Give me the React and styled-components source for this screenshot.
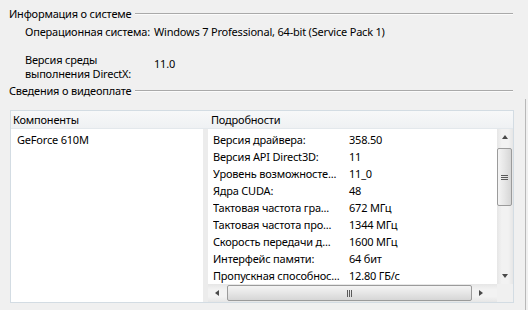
import React from "react"
import styled, { createGlobalStyle } from "styled-components"

const GlobalStyle = createGlobalStyle`
  html, body {
    margin: 0;
    padding: 0;
    background: #f0f0f0;
  }
  body {
    font-family: "Noto Sans", "Open Sans", sans-serif;
    font-size: 11px;
    letter-spacing: -0.2px;
    color: #000;
  }
`

const details = [
  ["Версия драйвера:", "358.50"],
  ["Версия API Direct3D:", "11"],
  ["Уровень возможносте...", "11_0"],
  ["Ядра CUDA:", "48"],
  ["Тактовая частота гра...", "672 МГц"],
  ["Тактовая частота про...", "1344 МГц"],
  ["Скорость передачи д...", "1600 МГц"],
  ["Интерфейс памяти:", "64 бит"],
  ["Пропускная способнос...", "12.80 ГБ/с"],
]

const Arrow = ({ dir }) => <ArrowGlyph $dir={dir} />

const App = () => {
  return (
    <Window>
      <GlobalStyle />
      <GroupTitle>
        <span>Информация о системе</span>
        <Rule />
      </GroupTitle>

      <InfoGrid>
        <InfoLabel>Операционная система:</InfoLabel>
        <InfoValue>Windows 7 Professional, 64-bit (Service Pack 1)</InfoValue>
        <InfoLabel $tall>
          Версия среды
          <br />
          выполнения DirectX:
        </InfoLabel>
        <InfoValue $tall>11.0</InfoValue>
      </InfoGrid>

      <GroupTitle $second>
        <span>Сведения о видеоплате</span>
        <Rule />
      </GroupTitle>

      <VideoArea>
        <ListPanel>
          <HeaderCell>Компоненты</HeaderCell>
          <HeaderCell $details>Подробности</HeaderCell>

          <ComponentList>
            <ListRow $left>GeForce 610M</ListRow>
          </ComponentList>
          <Splitter />
          <DetailsPane>
            <DetailsView>
              {details.map(([label, value]) => (
                <ListRow key={label}>
                  <DetailLabel>{label}</DetailLabel>
                  <span>{value}</span>
                </ListRow>
              ))}
            </DetailsView>

            <VScroll>
              <ScrollButton $v>
                <Arrow dir="up" />
              </ScrollButton>
              <Thumb $v>
                <svg width="7" height="7" viewBox="0 0 7 7">
                  <path d="M0 1.5h7M0 3.5h7M0 5.5h7" stroke="#5a5a5a" strokeWidth="1" />
                </svg>
              </Thumb>
              <Track />
              <ScrollButton $v>
                <Arrow dir="down" />
              </ScrollButton>
            </VScroll>

            <HScroll>
              <ScrollButton>
                <Arrow dir="left" />
              </ScrollButton>
              <Thumb>
                <svg width="7" height="7" viewBox="0 0 7 7">
                  <path d="M1.5 0v7M3.5 0v7M5.5 0v7" stroke="#5a5a5a" strokeWidth="1" />
                </svg>
              </Thumb>
              <ScrollButton>
                <Arrow dir="right" />
              </ScrollButton>
            </HScroll>

            <Corner />
          </DetailsPane>
        </ListPanel>
      </VideoArea>
    </Window>
  )
}

const Window = styled.div`
  width: 528px;
  height: 310px;
  padding-top: 6px;
  box-sizing: border-box;
  background: #f0f0f0;
  overflow: hidden;
  display: flex;
  flex-direction: column;
`

/* group caption with an etched rule that always starts at the same column */
const GroupTitle = styled.div`
  display: grid;
  grid-template-columns: 126px 1fr;
  align-items: center;
  height: 16px;
  line-height: 16px;
  padding: 0 15px 0 9px;
  margin-top: ${({ $second }) => ($second ? "2px" : "0")};
  white-space: nowrap;
`

const Rule = styled.div`
  height: 1px;
  background: #a9a9a9;
  border-bottom: 1px solid #fbfbfb;
`

const InfoGrid = styled.div`
  display: grid;
  grid-template-columns: 129px 1fr;
  row-gap: 13px;
  margin-top: 2px;
  padding-left: 25px;
`

const InfoLabel = styled.div`
  line-height: ${({ $tall }) => ($tall ? "14px" : "16px")};
  white-space: nowrap;
`

const InfoValue = styled.div`
  line-height: ${({ $tall }) => ($tall ? "14px" : "16px")};
  padding-top: ${({ $tall }) => ($tall ? "4px" : "0")};
  white-space: nowrap;
`

const VideoArea = styled.div`
  flex: 1;
  margin-right: 2px;
  padding: 11px 11px 0 10px;
  border-right: 1px solid #b8b8b8;
`

const ListPanel = styled.div`
  height: 193px;
  box-sizing: border-box;
  border: 1px solid #d3dce3;
  display: grid;
  grid-template-columns: 192px 5px 1fr;
  grid-template-rows: 18px 1fr;
  background: #fff;
`

const HeaderCell = styled.div`
  grid-column: ${({ $details }) => ($details ? "2 / 4" : "1")};
  padding-left: ${({ $details }) => ($details ? "8px" : "2px")};
  line-height: 18px;
  white-space: nowrap;
  background: linear-gradient(#f7f8f9, #eff1f3);
  border-bottom: 1px solid #e3e8ec;
  box-sizing: border-box;
`

const ComponentList = styled.div`
  padding-top: 2px;
  background: #fff;
`

const Splitter = styled.div`
  background: #ececec;
`

const DetailsPane = styled.div`
  display: grid;
  grid-template-columns: 1fr 16px;
  grid-template-rows: 1fr 18px;
  min-height: 0;
`

const DetailsView = styled.div`
  padding-top: 2px;
  overflow: hidden;
  background: #fff;
`

const ListRow = styled.div`
  display: flex;
  height: 17px;
  line-height: 17px;
  padding-left: ${({ $left }) => ($left ? "6px" : "5px")};
  white-space: nowrap;
`

const DetailLabel = styled.span`
  width: 136px;
  flex: none;
  overflow: hidden;
`

const VScroll = styled.div`
  display: flex;
  flex-direction: column;
  background: linear-gradient(90deg, #e6e6e6, #f2f2f2 30%, #f2f2f2 70%, #e6e6e6);
`

const HScroll = styled.div`
  display: flex;
  align-items: center;
  background: linear-gradient(#e6e6e6, #f2f2f2 30%, #f2f2f2 70%, #e6e6e6);
`

const Track = styled.div`
  flex: 1;
`

const ScrollButton = styled.div`
  flex: none;
  width: ${({ $v }) => ($v ? "16px" : "17px")};
  height: ${({ $v }) => ($v ? "17px" : "18px")};
  display: flex;
  align-items: center;
  justify-content: center;
`

const ArrowGlyph = styled.span`
  width: 0;
  height: 0;
  border: 3px solid transparent;
  ${({ $dir }) =>
    ({
      up: "border-bottom: 4px solid #4a4a4a; border-top: 0; margin-top: -1px;",
      down: "border-top: 4px solid #4a4a4a; border-bottom: 0;",
      left: "border-right: 4px solid #4a4a4a; border-left: 0;",
      right: "border-left: 4px solid #4a4a4a; border-right: 0;",
    })[$dir]}
`

const Thumb = styled.div`
  box-sizing: border-box;
  border: 1px solid #9b9b9b;
  border-radius: 2px;
  display: flex;
  align-items: center;
  justify-content: center;
  flex: none;
  ${({ $v }) =>
    $v
      ? `
    height: 58px;
    margin-top: 2px;
    width: 15px;
    background: linear-gradient(90deg, #f4f4f4, #e6e6e6 50%, #d6d6d6);
  `
      : `
    height: 16px;
    width: 245px;
    margin-left: 2px;
    background: linear-gradient(#f4f4f4, #e6e6e6 50%, #d6d6d6);
  `}
`

const Corner = styled.div`
  background: #f0f0f0;
`

export default App
